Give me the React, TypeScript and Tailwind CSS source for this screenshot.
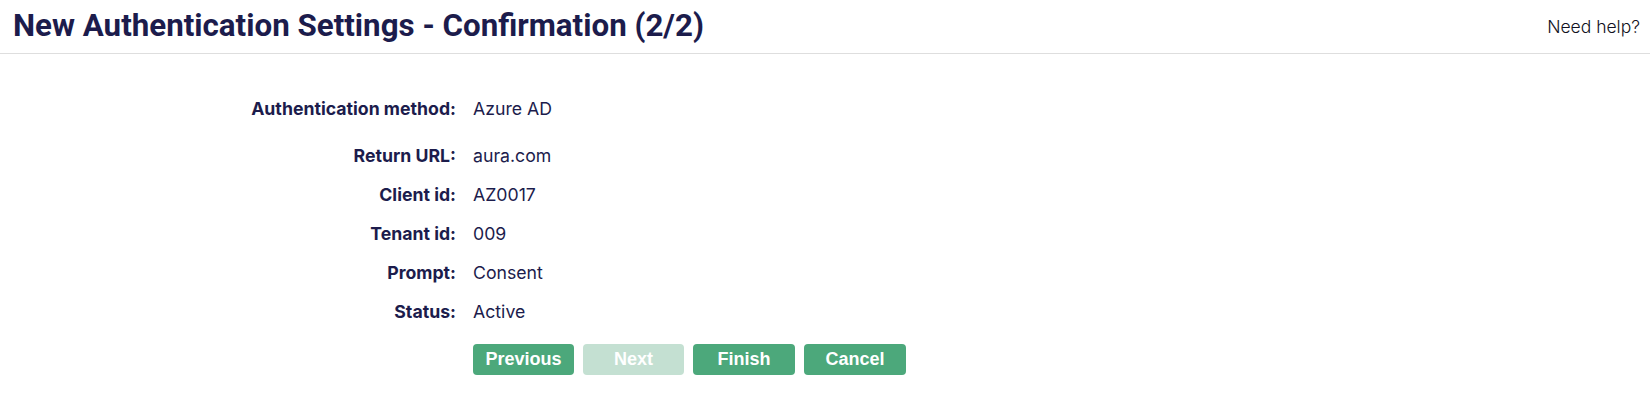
import React from 'react';

const rows: { label: string; value: string }[] = [
  { label: 'Return URL:', value: 'aura.com' },
  { label: 'Client id:', value: 'AZ0017' },
  { label: 'Tenant id:', value: '009' },
  { label: 'Prompt:', value: 'Consent' },
  { label: 'Status:', value: 'Active' },
];

const Row: React.FC<{ label: string; value: string }> = ({ label, value }) => (
  <div className="flex items-center h-[39px]">
    <div className="w-[456px] text-right font-bold">{label}</div>
    <div className="ml-[17px]">{value}</div>
  </div>
);

const App: React.FC = () => {
  return (
    <div className="min-h-screen bg-white text-[#1c1c4c]" style={{ fontFamily: 'Inter, "Noto Sans", sans-serif' }}>
      <header className="h-[54px] border-b border-[#dedede] flex items-center justify-between pl-[13px] pr-[10px]">
        <h1
          className="text-[31.3px] font-bold leading-none pb-[2px]"
          style={{ fontFamily: 'Roboto, "Liberation Sans", sans-serif' }}
        >
          New Authentication Settings - Confirmation (2/2)
        </h1>
        <a className="text-[17.5px] font-light text-[#111122] pt-[2px]">Need help?</a>
      </header>

      <main className="pt-[36px] text-[17.7px]">
        <Row label="Authentication method:" value="Azure AD" />
        <div className="mt-[8px]">
          {rows.map(r => (
            <Row key={r.label} label={r.label} value={r.value} />
          ))}
        </div>
        <div className="flex gap-[9px] ml-[473px] mt-[12px]" style={{ fontFamily: '"Liberation Sans", Arial, sans-serif' }}>
          <button className="w-[101px] h-[31px] rounded-[4px] bg-[#4ca87b] text-white font-bold text-[18px]">Previous</button>
          <button disabled className="w-[101px] h-[31px] rounded-[4px] bg-[#c4e0d2] text-white font-bold text-[18px]">Next</button>
          <button className="w-[102px] h-[31px] rounded-[4px] bg-[#4ca87b] text-white font-bold text-[18px]">Finish</button>
          <button className="w-[102px] h-[31px] rounded-[4px] bg-[#4ca87b] text-white font-bold text-[18px]">Cancel</button>
        </div>
      </main>
    </div>
  );
};

export default App;
